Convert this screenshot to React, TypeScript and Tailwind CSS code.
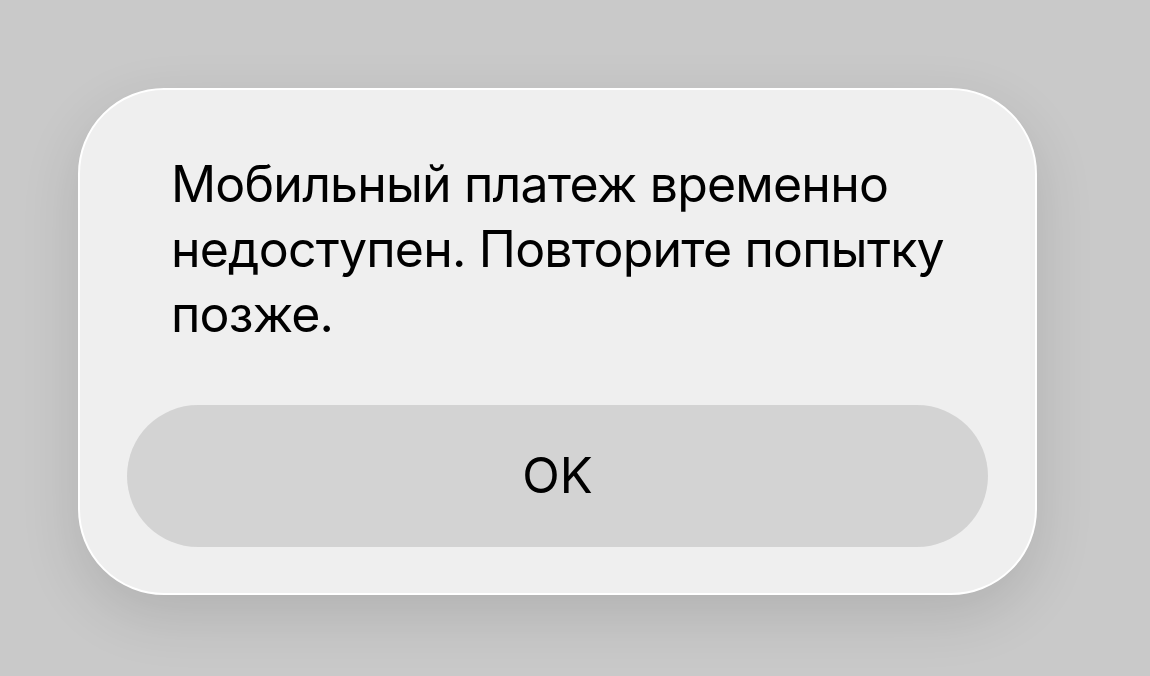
export default function App() {
  return (
    <div
      className="w-[1150px] h-[676px] bg-[#c9c9c9] pl-[78px] pt-[88px] overflow-hidden"
      style={{ fontFamily: 'Inter, "Noto Sans", "Liberation Sans", sans-serif' }}
    >
      {/* Alert card */}
      <div className="w-[959px] h-[507px] rounded-[86px] bg-[#efefef] border-2 border-white shadow-[0_20px_60px_rgba(0,0,0,0.12)] flex flex-col">
        <p className="pl-[91px] pr-[40px] pt-[62px] text-[50px] leading-[65px] tracking-[-0.8px] text-black">
          Мобильный платеж временно
          <br />
          недоступен. Повторите попытку
          <br />
          позже.
        </p>
        <div className="px-[47px] mt-[58px]">
          <button className="w-full h-[142px] rounded-full bg-[#d3d3d3] text-[49px] text-black flex items-center justify-center">
            OK
          </button>
        </div>
      </div>
    </div>
  );
}
